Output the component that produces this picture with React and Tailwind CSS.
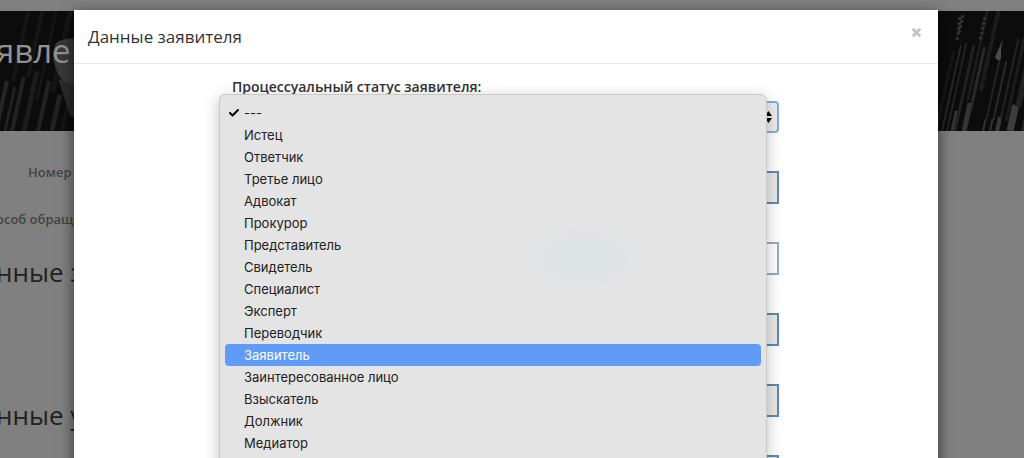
import { Check, X } from "lucide-react";

const options = [
  "---", "Истец", "Ответчик", "Третье лицо", "Адвокат", "Прокурор", "Представитель", "Свидетель",
  "Специалист", "Эксперт", "Переводчик", "Заявитель", "Заинтересованное лицо", "Взыскатель", "Должник", "Медиатор",
];

const fields = [
  { label: "Поле 2", style: "border-2 border-[#5b8bb0] bg-[#e9e9e9]" },
  { label: "Поле 3", style: "border-2 border-[#8fafc9] bg-white" },
  { label: "Поле 4", style: "border-2 border-[#5b8bb0] bg-[#e9e9e9]" },
  { label: "Поле 5", style: "border-2 border-[#5b8bb0] bg-[#e9e9e9]" },
  { label: "Поле 6", style: "border-2 border-[#5b8bb0] bg-[#e9e9e9]" },
];

// Each spine: x at its foot, top y, foot y, grey level, width.
const spines = [
  [-4, 70, 120, 38, 4], [2, 0, 70, 20, 4], [5, 76, 120, 32, 3], [12, 66, 120, 34, 4], [16, 0, 66, 22, 4],
  [24, 60, 120, 26, 5], [30, 0, 90, 20, 3], [38, 70, 120, 36, 4], [44, 0, 80, 24, 5], [52, 84, 120, 32, 5],
  [62, 60, 120, 22, 3], [936, 40, 120, 24, 3], [942, 34, 120, 38, 2], [947, 32, 120, 34, 2], [953, 100, 120, 52, 5],
  [955, 34, 120, 32, 3], [961, 0, 90, 26, 3], [964, 92, 120, 54, 5], [966, 36, 100, 44, 3], [972, 0, 80, 30, 4],
  [983, 108, 120, 50, 2], [984, 46, 110, 36, 2], [990, 108, 120, 52, 2], [991, 50, 110, 42, 2], [997, 106, 120, 56, 4],
  [998, 28, 108, 36, 2], [1004, 26, 110, 30, 3], [1010, 94, 120, 60, 7], [1013, 0, 96, 36, 6], [1023, 0, 120, 40, 4],
];

function Books() {
  return (
    <svg className="absolute inset-0 h-full w-full" viewBox="0 0 1024 120" preserveAspectRatio="none" aria-hidden="true">
      <defs>
        <filter id="soft"><feGaussianBlur stdDeviation="0.7" /></filter>
      </defs>
      <rect width="1024" height="120" fill="#0c0c0c" />
      <g filter="url(#soft)">
        {spines.map(([x, top, foot, g, w]) => (
          <path
            key={`${x}-${top}`}
            d={`M${x + (120 - top) * 0.22} ${top}L${x + (120 - foot) * 0.22} ${foot}`}
            stroke={`rgb(${g},${g},${g})`}
            strokeWidth={w}
          />
        ))}
        <path d="M56 32Q64 26 80 28V78L62 70Q48 46 56 32Z" fill="#383838" />
        <path d="M58 68L80 78V112L70 104Z" fill="#2a2a2a" />
        <path d="M1003 28L995 46Q998 52 1001 47L1001 38Z" fill="#4c4c4c" />
        <path d="M960 6L957 30M963 4L959 22M985 6L980 30" stroke="#333" strokeWidth="3" strokeDasharray="3 2" />
      </g>
    </svg>
  );
}

export default function App() {
  return (
    <div className="relative min-h-screen overflow-hidden bg-[#808080] font-['Open_Sans',sans-serif] text-[#222]">
      <main className="whitespace-nowrap pt-[11px]">
        <header className="relative flex h-[120px] overflow-hidden">
          <Books />
          <h1 className="relative -ml-1 mt-5 text-[33px] leading-10 text-[#929292]">явле</h1>
        </header>
        <p className="ml-7 mt-[31px] text-[13px] font-semibold leading-5 text-[#444]">Номер</p>
        <p className="-ml-1 mt-[27px] text-[13px] font-semibold leading-5 text-[#444]">особ обращ</p>
        <h2 className="-ml-1 mt-[23px] text-[26px] font-medium leading-10">нные з</h2>
        <h2 className="-ml-1 mt-[103px] text-[26px] font-medium leading-10">нные у</h2>
      </main>

      <div className="absolute inset-0 overflow-hidden pl-[74px] pr-[86px] pt-[10px]">
        <section role="dialog" aria-labelledby="title" className="min-h-screen bg-white shadow-[0_4px_14px_rgba(0,0,0,0.6)]">
          <header className="flex h-[54px] items-center justify-between border-b border-[#e8e8e8] px-[14px]">
            <h2 id="title" className="text-[17px] leading-6 text-[#333]">Данные заявителя</h2>
            <button aria-label="Закрыть" className="-mt-2 text-[#c4c4c4]"><X size={15} strokeWidth={5} strokeLinecap="butt" /></button>
          </header>
          <form className="flex flex-col pl-[158px] pr-[159px] pt-[14px]">
            <label htmlFor="status" className="text-[14px] font-semibold leading-[18px] text-[#333]">Процессуальный статус заявителя:</label>
            <div className="relative mt-[5px]">
              <select id="status" className="block h-[32px] w-full appearance-none rounded border-2 border-[#7fb0d6] bg-[#ececec] text-transparent"><option>---</option></select>
              <svg className="absolute right-[7px] top-[10px]" width="7" height="12" viewBox="0 0 7 12" aria-hidden="true"><path d="M0 5L3.5 0L7 5ZM0 7H7L3.5 12Z" fill="#000" /></svg>
              <ul role="listbox" aria-label="Процессуальный статус заявителя" className="absolute -left-[13px] -top-[7px] right-[12px] z-10 rounded-md border border-[#c9c9c9] bg-[#e4e4e4] bg-[radial-gradient(64px_34px_at_364px_162px,#dae4e2,#dfe3e4_55%,#e4e4e4)] px-[5px] pb-4 pt-[7px] font-['Inter',sans-serif] text-[13px] leading-[22px] text-[#222] shadow-[0_4px_16px_rgba(0,0,0,0.25)]">
                {options.map((o) => (
                  <li key={o} role="option" aria-selected={o === "---"} className={o === "Заявитель" ? "flex items-center rounded bg-[#619bf8] text-white" : "flex items-center"}>
                    <span className="flex w-[19px] pl-[3px] text-black">{o === "---" && <Check size={12} strokeWidth={4} />}</span>
                    {o}
                  </li>
                ))}
              </ul>
            </div>
            {fields.map((f) => (
              <input key={f.label} aria-label={f.label} className={`mt-[38px] h-[33px] w-full shrink-0 ${f.style}`} />
            ))}
          </form>
        </section>
      </div>
    </div>
  );
}
